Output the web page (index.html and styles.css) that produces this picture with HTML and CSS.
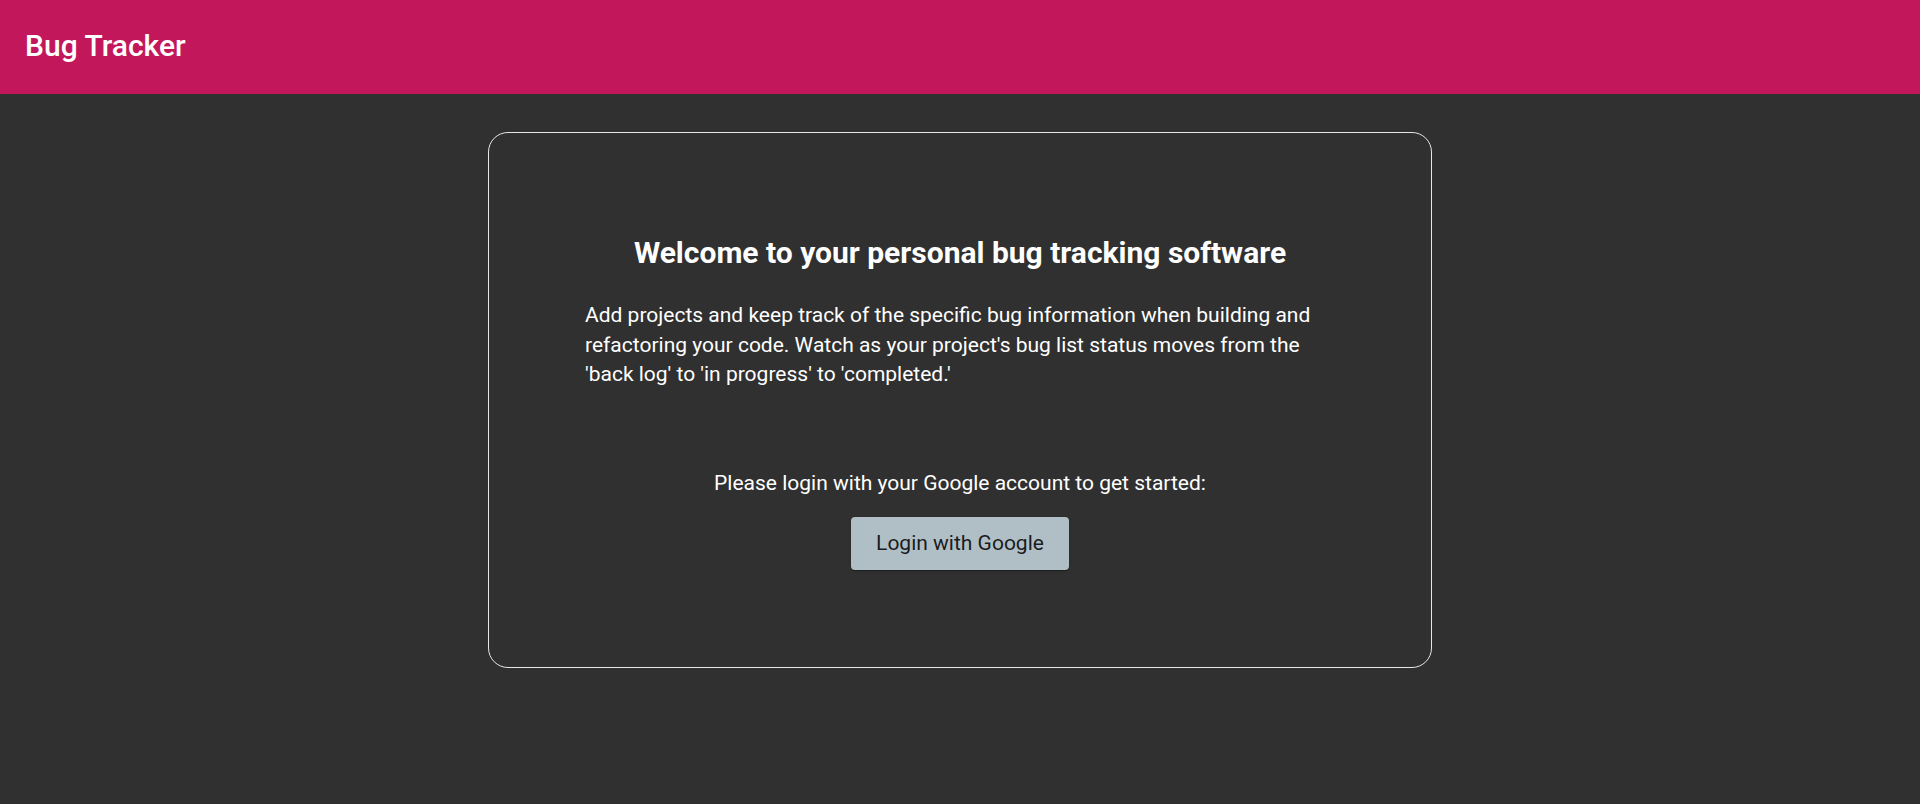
FILE: index.html
```html
<!DOCTYPE html>
<html lang="en">
<head>
<meta charset="utf-8">
<title>Bug Tracker</title>
<link rel="stylesheet" href="styles.css">
</head>
<body>
<header class="app-bar">
  <h1 class="app-title">Bug Tracker</h1>
</header>
<main class="page">
  <section class="welcome-card">
    <h2 class="welcome-title">Welcome to your personal bug tracking software</h2>
    <p class="welcome-text">Add projects and keep track of the specific bug information when building and refactoring your code. Watch as your project's bug list status moves from the 'back log' to 'in progress' to 'completed.'</p>
    <p class="login-prompt">Please login with your Google account to get started:</p>
    <button class="login-button" type="button">Login with Google</button>
  </section>
</main>
</body>
</html>
```

FILE: styles.css
```css
* {
  box-sizing: border-box;
}

html, body {
  margin: 0;
  padding: 0;
  background: #303030;
  font-family: Roboto, "Liberation Sans", sans-serif;
  color: #ffffff;
}

body {
  min-height: 804px;
}

.app-bar {
  height: 94px;
  background: #c2185b;
  padding: 28px 25px 0;
}

.app-title {
  margin: 0;
  font-size: 30px;
  font-weight: 500;
  line-height: normal;
  color: #ffffff;
}

.page {
  display: flex;
  justify-content: center;
  padding-top: 38px;
}

.welcome-card {
  width: 944px;
  height: 536px;
  border: 1px solid #e6e6e6;
  border-radius: 20px;
  padding: 102px 0 0;
  display: flex;
  flex-direction: column;
  align-items: center;
}

.welcome-title {
  margin: 0;
  font-size: 30px;
  font-weight: 700;
  line-height: normal;
  text-align: center;
}

.welcome-text {
  width: 750px;
  margin: 31px 0 0;
  font-size: 21px;
  line-height: 29.5px;
  font-weight: 400;
}

.login-prompt {
  margin: 81px 0 0;
  font-size: 21px;
  line-height: normal;
  text-align: center;
}

.login-button {
  margin-top: 22px;
  height: 53px;
  padding: 0 25px;
  border: none;
  border-radius: 4px;
  background: #b0bec5;
  color: rgba(0, 0, 0, 0.87);
  font-family: Roboto, "Liberation Sans", sans-serif;
  font-size: 21px;
  font-weight: 400;
  box-shadow: 0 2px 1px -1px rgba(0,0,0,0.2), 0 1px 1px 0 rgba(0,0,0,0.14), 0 1px 3px 0 rgba(0,0,0,0.12);
  cursor: pointer;
}
```
